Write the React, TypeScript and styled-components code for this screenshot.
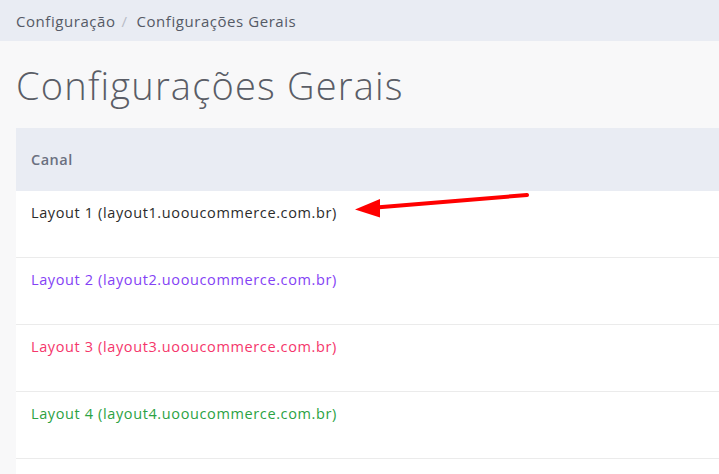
import React from "react";
import styled, { createGlobalStyle } from "styled-components";

const GlobalStyles = createGlobalStyle`
  html, body {
    margin: 0;
    padding: 0;
    background: #f8f8f9;
    font-family: "Open Sans", "DejaVu Sans", sans-serif;
    overflow: hidden;
  }
`;

const Breadcrumb = styled.nav`
  height: 41px;
  background: #e9ecf3;
  display: flex;
  align-items: center;
  padding: 0 16px;
  font-size: 15px;
  letter-spacing: 0.55px;
  color: #555a66;
`;

const Crumb = styled.span``;

const Sep = styled.span`
  color: #b8bcc6;
  margin: 0 9px 0 6px;
`;

const Content = styled.main`
  padding: 0 0 0 16px;
  position: relative;
`;

const Title = styled.h1`
  margin: 0;
  height: 87px;
  display: flex;
  align-items: center;
  font-size: 38px;
  font-weight: 300;
  color: #5a5d66;
  letter-spacing: 1.2px;
`;

const Table = styled.div`
  width: 720px;
  background: #fff;
`;

const HeadRow = styled.div`
  height: 63px;
  background: #e9ecf3;
  display: flex;
  align-items: center;
  padding-left: 15px;
  font-size: 14.5px;
  letter-spacing: 0.5px;
  font-weight: 600;
  color: #6b7080;
`;

const Row = styled.div<{ $color: string }>`
  height: 67px;
  border-top: 1px solid #ebebeb;
  padding: 12px 0 0 15px;
  box-sizing: border-box;
  font-size: 14.5px;
  letter-spacing: 0.62px;
  color: ${(p) => p.$color};
  &:first-of-type {
    border-top: none;
    height: 66px;
  }
`;

const Arrow = styled.svg`
  position: absolute;
  left: 0;
  pointer-events: none;
`;

const rows = [
  { name: "Layout 1 (layout1.uooucommerce.com.br)", color: "#2b2b2b" },
  { name: "Layout 2 (layout2.uooucommerce.com.br)", color: "#8442f5" },
  { name: "Layout 3 (layout3.uooucommerce.com.br)", color: "#f5366b" },
  { name: "Layout 4 (layout4.uooucommerce.com.br)", color: "#2ba243" },
  { name: "Layout Pilares Fácil (layout5.uooucommerce.com.br)", color: "#2b2b2b" },
];

function App() {
  return (
    <>
      <GlobalStyles />
      <Breadcrumb>
        <Crumb>Configuração</Crumb>
        <Sep>/</Sep>
        <Crumb>Configurações Gerais</Crumb>
      </Breadcrumb>
      <Content>
        <Title>Configurações Gerais</Title>
        <Table>
          <HeadRow>Canal</HeadRow>
          <div>
            {rows.map((r) => (
              <Row key={r.name} $color={r.color}>
                {r.name}
              </Row>
            ))}
          </div>
        </Table>
        <Arrow width="719" height="474" style={{ top: -41 }}>
          <line x1="527" y1="195" x2="376" y2="207.5" stroke="#f00" strokeWidth="4" strokeLinecap="round" />
          <polygon points="355,209.5 380,199 380,217.5" fill="#f00" />
        </Arrow>
      </Content>
    </>
  );
}

export default App;
